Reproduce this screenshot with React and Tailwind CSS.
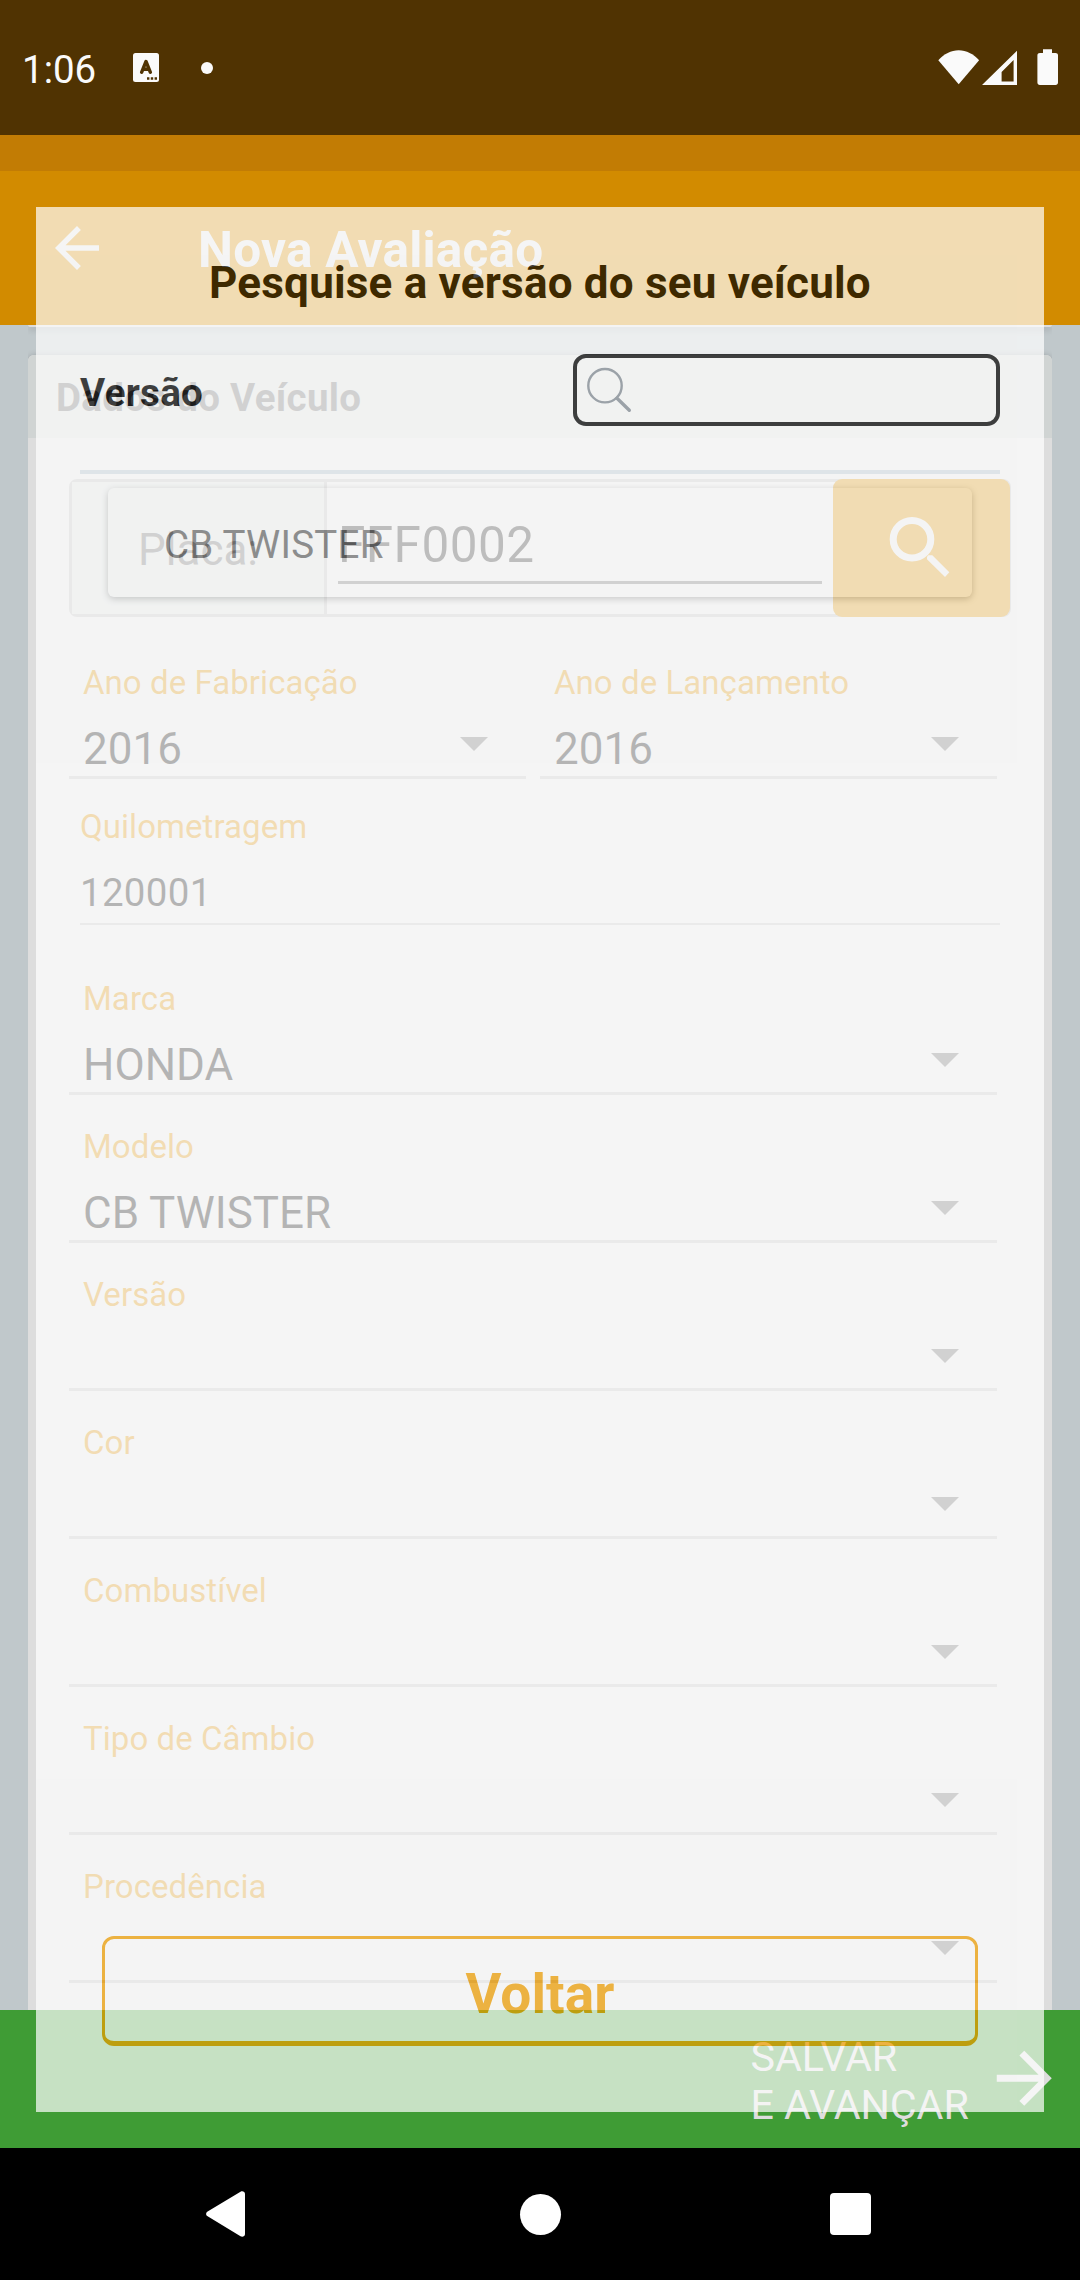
const fieldsBelow = [
  { label: 'Marca', value: 'HONDA' },
  { label: 'Modelo', value: 'CB TWISTER' },
  { label: 'Versão', value: '' },
  { label: 'Cor', value: '' },
  { label: 'Combustível', value: '' },
  { label: 'Tipo de Câmbio', value: '' },
  { label: 'Procedência', value: '' },
];

function SelectField({ label, value }) {
  return (
    <div className="flex h-[148px] flex-1 flex-col border-b-[3px] border-[#b7b7b7] pt-8 pl-[14px]">
      <div className="h-10 text-[33px] leading-10 tracking-[0.06px] text-[#d28b00]">{label}</div>
      <div className="mt-5 flex h-[52px] items-start justify-between pr-[38px] text-[44px] leading-[52px] text-[#050505]">
        <span>{value}</span>
        <svg viewBox="0 0 28 14" className="mt-3.5 h-3.5 w-7 text-[#656565]" fill="currentColor">
          <path d="M0 0h28L14 14z" />
        </svg>
      </div>
    </div>
  );
}

function StatusBar() {
  return (
    <div className="flex h-[135px] items-center bg-[#503302] px-[22px] text-[#fafafa]">
      <span className="mt-[5px] w-[74px] text-[38.5px] leading-[46px] whitespace-nowrap">1:06</span>
      <svg viewBox="0 0 26 29" className="ml-[37px] h-[29px] w-[26px]">
        <rect width="26" height="29" rx="2.5" fill="currentColor" />
        <path d="M8.600 19.300 13 8.500 17.400 19.300M10 16.200h6" fill="none" stroke="#503302" strokeWidth="3.400" strokeLinecap="round" strokeLinejoin="round" />
        <path d="M14 24.300h2.400v2.400H14zM17.800 24.300h2.400v2.400h-2.400zM21.600 24.300H24v2.400h-2.400z" fill="#503302" />
      </svg>
      <span className="ml-[42px] size-3 rounded-full bg-current" />
      <svg viewBox="0 0 120 37" className="ml-auto h-[37px] w-[120px]" fill="currentColor">
        <path d="M.3 11.200C6 5 13 1.300 20.700 1.300S35.400 5 41.100 11.200L20.700 35.300z" />
        <path fillRule="evenodd" d="M79 1.700V36H44zM75.600 11 63.600 23v9.600h12z" />
        <path d="M105 .3h9v3.700h3.500c1.400 0 2.500.8 2.500 2.200v27.400c0 1.400-1 2.400-2.400 2.400h-15.800c-1.400 0-2.400-1-2.400-2.400V6.200c0-1.400 1.100-2.200 2.500-2.200h3.100z" />
      </svg>
    </div>
  );
}

function NavBar() {
  return (
    <div className="flex h-[132px] items-center bg-black pl-[206px] text-white">
      <svg viewBox="0 0 39 46" className="h-[46px] w-[39px]" fill="currentColor">
        <path d="M34.500.7 1.200 20.800c-1.500.9-1.500 3.300 0 4.200L34.500 45.300c2 1.100 4.500 0 4.500-2.300V3C39 .7 36.500-.4 34.500.7z" />
      </svg>
      <span className="ml-[274.500px] size-[41px] rounded-full bg-current" />
      <span className="ml-[269.500px] h-[42px] w-[41px] rounded-[4px] bg-current" />
    </div>
  );
}

function Page() {
  return (
    <div className="flex h-[2280px] flex-col">
      <StatusBar />
      <div className="h-9 bg-[#c27c04]" />
      <header className="flex h-[154px] items-center bg-[#d28b00] pl-11 text-[#dddddd]">
        <svg viewBox="0 0 24 24" className="size-[66px]" fill="currentColor">
          <path d="M20 11H7.830l5.590-5.590L12 4l-8 8 8 8 1.410-1.410L7.830 13H20v-2z" />
        </svg>
        <h1 className="ml-[88px] mt-1 text-[49.5px] leading-[58px] font-bold tracking-[0.24px]">Nova Avaliação</h1>
      </header>
      <main className="flex flex-1 flex-col overflow-hidden bg-[#c0c8cb] px-7">
        <div className="flex flex-1 flex-col overflow-hidden">
          <div className="h-[2px] shrink-0 rounded-b-[6px] bg-[#dddddd] shadow-[0_2px_6px_rgba(0,0,0,0.28)]" />
          <section className="mt-7 flex-1 rounded-t-[6px] bg-[#dddddd] shadow-[0_1px_6px_rgba(0,0,0,0.25)]">
            <h2 className="h-[83px] rounded-t-[6px] bg-[#d0d4d3] pt-[21px] pl-[28px] text-[38.5px] leading-[44px] font-bold tracking-[0.3px] text-[#656565]">
              Dados do Veículo
            </h2>
            <div className="mt-[41px] ml-[41px] flex h-[138px] w-[942px] rounded-[8px] border-[3px] border-[#b7b7b7]">
              <div className="w-[255px] border-r-[3px] border-[#b7b7b7] bg-[#d0d4d3] pt-[42px] pl-[66px] text-[44px] leading-[52px] text-[#656565]">
                Placa:
              </div>
              <div className="ml-[11px] h-[102px] w-[484px] border-b-[3px] border-[#656565] pt-[34px] text-[49.5px] leading-[58px] tracking-[0.45px] text-[#232323]">
                FFF0002
              </div>
              <div className="-my-[3px] -mr-[2px] ml-auto w-[177px] rounded-[9px] bg-[#d28b00] pt-[38px] pl-[56px]">
                <svg viewBox="0 0 61 62" className="h-[62px] w-[61px] text-[#dddddd]" fill="currentColor">
                  <circle cx="23" cy="22.300" r="18.800" fill="none" stroke="currentColor" strokeWidth="7" />
                  <path d="M39.300 38.200h4L60.300 55.300 56 60 38 42.300v-2.500z" />
                </svg>
              </div>
            </div>
            <div className="mt-3.5 ml-[41px] flex w-[928px] gap-3.5">
              <SelectField label="Ano de Fabricação" value="2016" />
              <SelectField label="Ano de Lançamento" value="2016" />
            </div>
            <div className="ml-[52px] h-[146px] w-[920px] border-b-2 border-[#b7b7b7] pt-7">
              <div className="h-10 text-[33px] leading-10 tracking-[0.06px] text-[#d28b00]">Quilometragem</div>
              <div className="mt-[23px] text-[38.5px] leading-[46px] tracking-[0.3px] text-[#050505]">120001</div>
            </div>
            <div className="mt-[22px] ml-[41px] w-[928px]">
              {fieldsBelow.map((f) => (
                <div key={f.label} className="flex">
                  <SelectField label={f.label} value={f.value} />
                </div>
              ))}
            </div>
          </section>
        </div>
      </main>
      <footer className="flex h-[138px] items-center justify-end bg-[#3f9c35] pr-[15px] text-[#dddddd]">
        <div className="mt-1 w-[232px] text-[41.25px] leading-[48px] tracking-[-0.1px]">
          SALVAR
          <br />E AVANÇAR
        </div>
        <svg viewBox="0 0 24 24" className="-mt-px size-[82.5px]" fill="currentColor">
          <path d="M12 4l-1.410 1.410L16.170 11H4v2h12.170l-5.580 5.590L12 20l8-8z" />
        </svg>
      </footer>
      <NavBar />
    </div>
  );
}

function VersionDialog() {
  return (
    <div className="absolute top-[207px] left-9 flex h-[1905px] w-[1008px] flex-col bg-white px-11 opacity-70">
      <h2 className="mt-[50px] text-center text-[44px] leading-[52px] font-bold tracking-[0.2px] text-black">
        Pesquise a versão do seu veículo
      </h2>
      <div className="mt-[45px] flex h-[72px] justify-between">
        <span className="mt-[17px] text-[38.5px] leading-[44px] font-bold tracking-[0.3px] text-black">Versão</span>
        <div className="h-[72px] w-[427px] rounded-[13px] border-4 border-black pt-[9px] pl-[9px]">
          <svg viewBox="0 0 46 46" className="size-[46px] text-[#868d96]" fill="none" stroke="currentColor">
            <circle cx="19" cy="18.700" r="16.700" strokeWidth="2.400" />
            <path d="M31 31.300 43.300 43.300" strokeWidth="3.400" strokeLinecap="round" />
          </svg>
        </div>
      </div>
      <div className="mt-11 h-1 bg-[#dfe8ee]" />
      <div className="mx-7 mt-3.5 h-[109px] rounded-[6px] bg-white pt-[34px] pl-[56px] text-[38.5px] leading-[46px] tracking-[0.25px] text-[#707070] shadow-[0_2px_7px_rgba(0,0,0,0.24)]">
        CB TWISTER
      </div>
      <button className="mx-[22px] mt-auto mb-[66px] h-[110px] rounded-[12px] border-[3px] border-b-[5px] border-[#f3a000] bg-white pt-[7px] text-[55px] leading-[64px] font-bold tracking-[0.1px] text-[#f3a000]">
        Voltar
      </button>
    </div>
  );
}

export default function App() {
  return (
    <div className="relative h-[2280px] w-[1080px] overflow-hidden font-['Roboto',sans-serif]">
      <Page />
      <VersionDialog />
    </div>
  );
}
